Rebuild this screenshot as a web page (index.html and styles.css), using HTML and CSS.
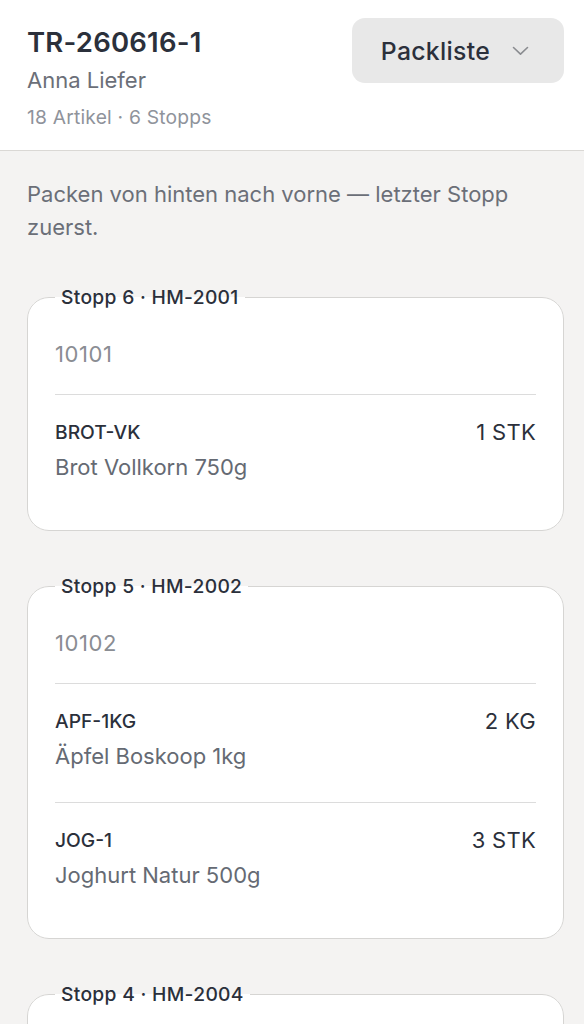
FILE: index.html
```html
<!DOCTYPE html>
<html lang="de">
<head>
  <meta charset="UTF-8">
  <meta name="viewport" content="width=device-width, initial-scale=1.0">
  <title>Packliste TR-260616-1</title>
  <link rel="stylesheet" href="styles.css">
</head>
<body>
  <div class="header">
    <div class="tour">
      <div class="tour-id">TR-260616-1</div>
      <div class="driver">Anna Liefer</div>
      <div class="meta">18 Artikel · 6 Stopps</div>
    </div>
    <button class="view-select">
      <span>Packliste</span>
      <svg width="17" height="10" viewBox="0 0 17 10"><path d="M1.5 1.5 L8.5 8.2 L15.5 1.5" fill="none" stroke="#8a8c90" stroke-width="1.6" stroke-linecap="round" stroke-linejoin="round"/></svg>
    </button>
  </div>

  <div class="content">
    <p class="hint">Packen von hinten nach vorne — letzter Stopp zuerst.</p>

    <fieldset class="stop">
      <legend>Stopp 6 · HM-2001</legend>
      <div class="zip">10101</div>
      <div class="item">
        <div class="item-top">
          <span class="sku">BROT-VK</span>
          <span class="qty">1 STK</span>
        </div>
        <div class="item-name">Brot Vollkorn 750g</div>
      </div>
    </fieldset>

    <fieldset class="stop">
      <legend>Stopp 5 · HM-2002</legend>
      <div class="zip">10102</div>
      <div class="item">
        <div class="item-top">
          <span class="sku">APF-1KG</span>
          <span class="qty">2 KG</span>
        </div>
        <div class="item-name">Äpfel Boskoop 1kg</div>
      </div>
      <div class="item">
        <div class="item-top">
          <span class="sku">JOG-1</span>
          <span class="qty">3 STK</span>
        </div>
        <div class="item-name">Joghurt Natur 500g</div>
      </div>
    </fieldset>

    <fieldset class="stop">
      <legend>Stopp 4 · HM-2004</legend>
      <div class="zip">10104</div>
      <div class="item">
        <div class="item-top">
          <span class="sku">MIL-1L</span>
          <span class="qty">6 STK</span>
        </div>
        <div class="item-name">Milch 1L</div>
      </div>
    </fieldset>
  </div>
</body>
</html>
```

FILE: styles.css
```css
body {
  margin: 0;
  font-family: Inter, "Noto Sans", sans-serif;
  background-color: #f4f3f2;
  color: #2b303b;
}
.header {
  display: flex;
  justify-content: space-between;
  align-items: flex-start;
  padding: 18px 20px 21px 27px;
  background-color: #fff;
  border-bottom: 1px solid #dad8d5;
}
.tour {
  padding-top: 7px;
}
.tour-id {
  font-size: 27.5px;
  font-weight: 600;
  line-height: 34px;
  letter-spacing: 0.2px;
}
.driver {
  margin-top: 7px;
  font-size: 22px;
  line-height: 28px;
  color: #6b6f78;
}
.meta {
  margin-top: 11px;
  font-size: 19.25px;
  line-height: 24px;
  letter-spacing: 0.2px;
  color: #8f939b;
}
.view-select {
  display: flex;
  align-items: center;
  gap: 22px;
  height: 65px;
  padding: 0 35px 0 29px;
  border: none;
  border-radius: 13px;
  background-color: #e8e8e8;
  font-family: inherit;
  font-size: 24.75px;
  font-weight: 500;
  letter-spacing: 0.3px;
  color: #2b303b;
}
.content {
  padding: 27px 20px 0 27px;
}
.hint {
  margin: 0;
  font-size: 22px;
  line-height: 33px;
  color: #6b6f78;
}
.stop {
  margin: 41px 0 0 0;
  padding: 31px 27px 17px 27px;
  border: 1px solid #d6d5d3;
  border-radius: 22px;
  background-color: #fff;
  min-width: 0;
}
.stop + .stop {
  margin-top: 43px;
}
.stop legend {
  padding: 0 6px;
  font-size: 19.25px;
  font-weight: 500;
  line-height: 24px;
  letter-spacing: 0.3px;
  color: #2b303b;
}
.zip {
  font-size: 22px;
  line-height: 28px;
  padding-bottom: 26px;
  letter-spacing: 0.6px;
  color: #8a8d93;
}
.item {
  border-top: 1px solid #dcdcdc;
  padding: 25px 0 32px 0;
}
.item-top {
  display: flex;
  justify-content: space-between;
  align-items: center;
  line-height: 24px;
}
.sku {
  font-size: 19.25px;
  font-weight: 500;
}
.qty {
  font-size: 22px;
  letter-spacing: 0.3px;
}
.item-name {
  margin-top: 9px;
  font-size: 22px;
  line-height: 28px;
  color: #656a73;
}
```
